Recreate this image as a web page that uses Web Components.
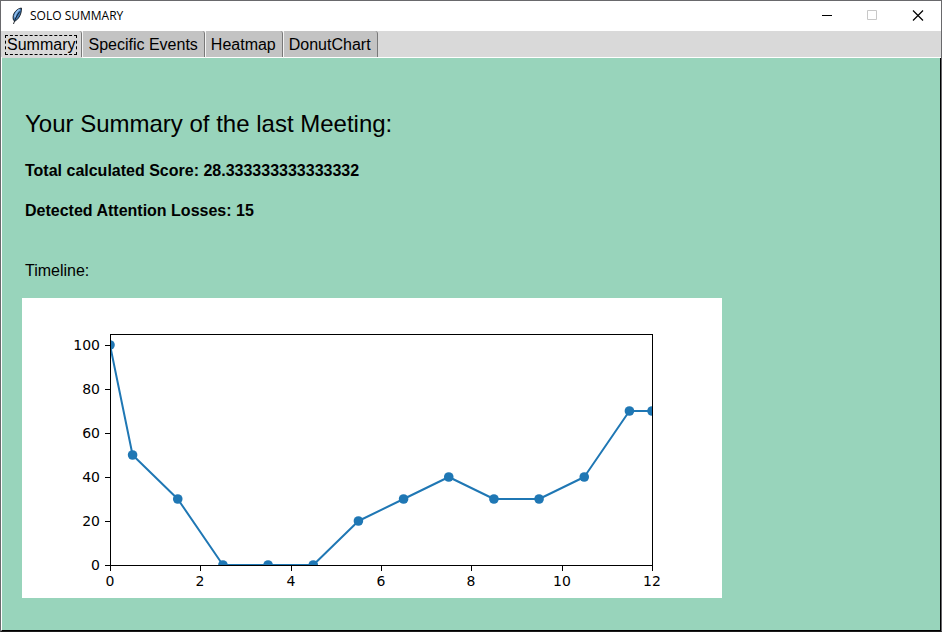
<!DOCTYPE html>
<html lang="en">
<head>
<meta charset="utf-8">
<title>SOLO SUMMARY</title>
<style>
  html, body { height: 100%; }
  body { margin: 0; font-family: "Liberation Sans", Arial, sans-serif; font-size: 16px; color: #000; }
</style>
</head>
<body>
<app-window></app-window>

<template id="tpl-window">
  <style>
    :host { display: flex; flex-direction: column; min-height: 100vh; box-sizing: border-box; background: #fff;
            border: 1px solid #69696c; border-bottom-color: #1c1c1c; }
    summary-panel { flex: 1; }
  </style>
  <title-bar>SOLO SUMMARY</title-bar>
  <tab-strip>
    <tab-item selected>Summary</tab-item>
    <tab-item>Specific Events</tab-item>
    <tab-item>Heatmap</tab-item>
    <tab-item>DonutChart</tab-item>
  </tab-strip>
  <summary-panel>
    <span slot="title">Your Summary of the last Meeting:</span>
    <span slot="score">Total calculated Score: 28.333333333333332</span>
    <span slot="losses">Detected Attention Losses: 15</span>
    <span slot="caption">Timeline:</span>
    <line-chart slot="chart" points="0,100 0.5,50 1.5,30 2.5,0 3.5,0 4.5,0 5.5,20 6.5,30 7.5,40 8.5,30 9.5,30 10.5,40 11.5,70 12,70"></line-chart>
  </summary-panel>
</template>

<template id="tpl-title">
  <style>
    :host { display: flex; align-items: center; height: 30px; background: #fff;
            font: 12px/16px "Open Sans", "Noto Sans", sans-serif; }
    .feather { width: 12px; height: 18px; margin-left: 10px; }
    .name { flex: 1; margin-left: 7px; font: inherit; white-space: nowrap; }
    .controls { display: flex; height: 30px; }
    button { width: 46px; height: 28px; padding: 0; border: 0; background: none; display: grid; place-items: center; }
    .controls svg { width: 12px; height: 12px; display: block; }
  </style>
  <svg class="feather" viewBox="0 0 12 18" aria-hidden="true">
    <path d="M10.400 1C7.600 1.300 4.500 3.500 3 6.500 1.800 9 1.800 12 2.800 13.500l1 .8C6.600 12.800 9 9.500 9.900 6 10.300 4 10.700 2.200 10.400 1z" fill="#3f7ab8" stroke="#10151c" stroke-width=".9"/>
    <path d="M8.700 2.500C6 4 4.200 7 3.800 10.500" fill="none" stroke="#94c0ee" stroke-width="1.600"/>
    <path d="M8.800 4.500C6.400 7.500 4 12 2.500 17" fill="none" stroke="#10151c" stroke-width=".9"/>
  </svg>
  <span class="name"><slot></slot></span>
  <div class="controls">
    <button type="button" aria-label="Minimize"><svg viewBox="0 0 12 12"><path d="M2 6.5h10" stroke="#000"/></svg></button>
    <button type="button" aria-label="Maximize" disabled><svg viewBox="0 0 12 12"><path d="M1.500 1.500h9v9h-9z" fill="none" stroke="#c8c8c8"/></svg></button>
    <button type="button" aria-label="Close"><svg viewBox="0 0 12 12"><path d="M1 1.500l10 10M11 1.500l-10 10" stroke="#000" stroke-width="1.200"/></svg></button>
  </div>
</template>

<template id="tpl-strip">
  <style>:host { display: flex; height: 27px; padding-left: 1px; background: #d9d9d9; box-shadow: inset 0 -1px #fff; }</style>
  <slot></slot>
</template>

<template id="tpl-tab">
  <style>
    :host { display: flex; border-left: 1px solid #f4f4f4; }
    button { height: 26px; padding: 1px 6px 0 5px; border: 0; border-right: 1px solid #787878;
             border-top-right-radius: 3px; background: #c3c3c3; color: #000; font: inherit; line-height: 20px; white-space: nowrap; }
    span { display: block; }
    :host([selected]) { border-left-color: #d9d9d9; background: #d9d9d9; }
    :host([selected]) button { padding: 1px 4px 0 2px; background: #d9d9d9; outline: none; }
    :host([selected]) span { border: 1px dashed #000; padding: 0 1px; line-height: 18px; }
  </style>
  <button type="button" role="tab"><span><slot></slot></span></button>
</template>

<template id="tpl-panel">
  <style>
    :host { display: block; box-sizing: border-box; padding: 52px 20px 32px; background: #98d4bb;
            border-left: 1px solid #fff; border-right: 1px solid #000; border-bottom: 1px solid #000; }
    h1, p { margin: 0 3px; font-size: 16px; line-height: 20px; }
    h1 { font-size: 24px; line-height: 28px; font-weight: 400; }
    .bold { font-weight: 700; }
    .score { margin-top: 23px; }
    .losses { margin-top: 20px; }
    .caption { margin-top: 40px; margin-bottom: 17px; }
  </style>
  <h1><slot name="title"></slot></h1>
  <p class="bold score"><slot name="score"></slot></p>
  <p class="bold losses"><slot name="losses"></slot></p>
  <p class="caption"><slot name="caption"></slot></p>
  <slot name="chart"></slot>
</template>

<template id="tpl-chart">
  <style>
    :host { display: block; max-width: 700px; background: #fff; }
    svg { display: block; width: 100%; height: auto; font: 14px "DejaVu Sans", sans-serif; }
    .axis { fill: none; stroke: #000; }
    .line { fill: none; stroke: #1f77b4; stroke-width: 2; stroke-linejoin: round; }
    circle { fill: #1f77b4; }
    .x { text-anchor: middle; }
    .y { text-anchor: end; }
  </style>
  <svg viewBox="0 0 700 300" role="img" aria-label="Timeline">
    <defs><clipPath id="plot"><rect x="88" y="36" width="543" height="232"/></clipPath></defs>
    <g class="data" clip-path="url(#plot)"></g>
    <rect class="axis" x="88.5" y="36.5" width="542" height="231"/>
    <g class="ticks"></g>
  </svg>
</template>

<script>
  class TemplateElement extends HTMLElement {
    constructor() {
      super();
      this.attachShadow({ mode: "open" });
      this.shadowRoot.append(document.getElementById(this.constructor.template).content.cloneNode(true));
    }
  }
  class TitleBar extends TemplateElement { static template = "tpl-title"; }
  class TabStrip extends TemplateElement {
    static template = "tpl-strip";
    connectedCallback() {
      this.setAttribute("role", "tablist");
      this.addEventListener("click", (e) => {
        const tab = e.target.closest("tab-item");
        if (tab) for (const t of this.children) t.toggleAttribute("selected", t === tab);
      });
    }
  }
  class TabItem extends TemplateElement {
    static template = "tpl-tab";
    static observedAttributes = ["selected"];
    connectedCallback() { this.sync(); }
    attributeChangedCallback() { this.sync(); }
    sync() { this.shadowRoot.querySelector("button").setAttribute("aria-selected", this.hasAttribute("selected")); }
  }
  class SummaryPanel extends TemplateElement { static template = "tpl-panel"; }
  class LineChart extends TemplateElement {
    static template = "tpl-chart";
    connectedCallback() {
      const px = (x) => 88 + x * 542 / 12;
      const py = (y) => 267 - y * 2.2;
      const pts = this.getAttribute("points").split(" ").map((p) => p.split(",").map(Number));
      const root = this.shadowRoot;
      root.querySelector(".data").innerHTML =
        `<polyline class="line" points="${pts.map(([x, y]) => px(x) + "," + py(y)).join(" ")}"/>` +
        pts.map(([x, y]) => `<circle cx="${px(x)}" cy="${py(y)}" r="4.8"/>`).join("");
      let ticks = "";
      for (let x = 0; x <= 12; x += 2) {
        const at = Math.round(px(x));
        ticks += `<path class="axis" d="M${at + 0.5} 268v5"/><text class="x" x="${at}" y="288">${x}</text>`;
      }
      for (let y = 0; y <= 100; y += 20) {
        const at = Math.round(py(y));
        ticks += `<path class="axis" d="M83 ${at + 0.5}h5"/><text class="y" x="78" y="${at + 5}">${y}</text>`;
      }
      root.querySelector(".ticks").innerHTML = ticks;
    }
  }
  class AppWindow extends TemplateElement { static template = "tpl-window"; }
  customElements.define("title-bar", TitleBar);
  customElements.define("tab-strip", TabStrip);
  customElements.define("tab-item", TabItem);
  customElements.define("summary-panel", SummaryPanel);
  customElements.define("line-chart", LineChart);
  customElements.define("app-window", AppWindow);
</script>
</body>
</html>
